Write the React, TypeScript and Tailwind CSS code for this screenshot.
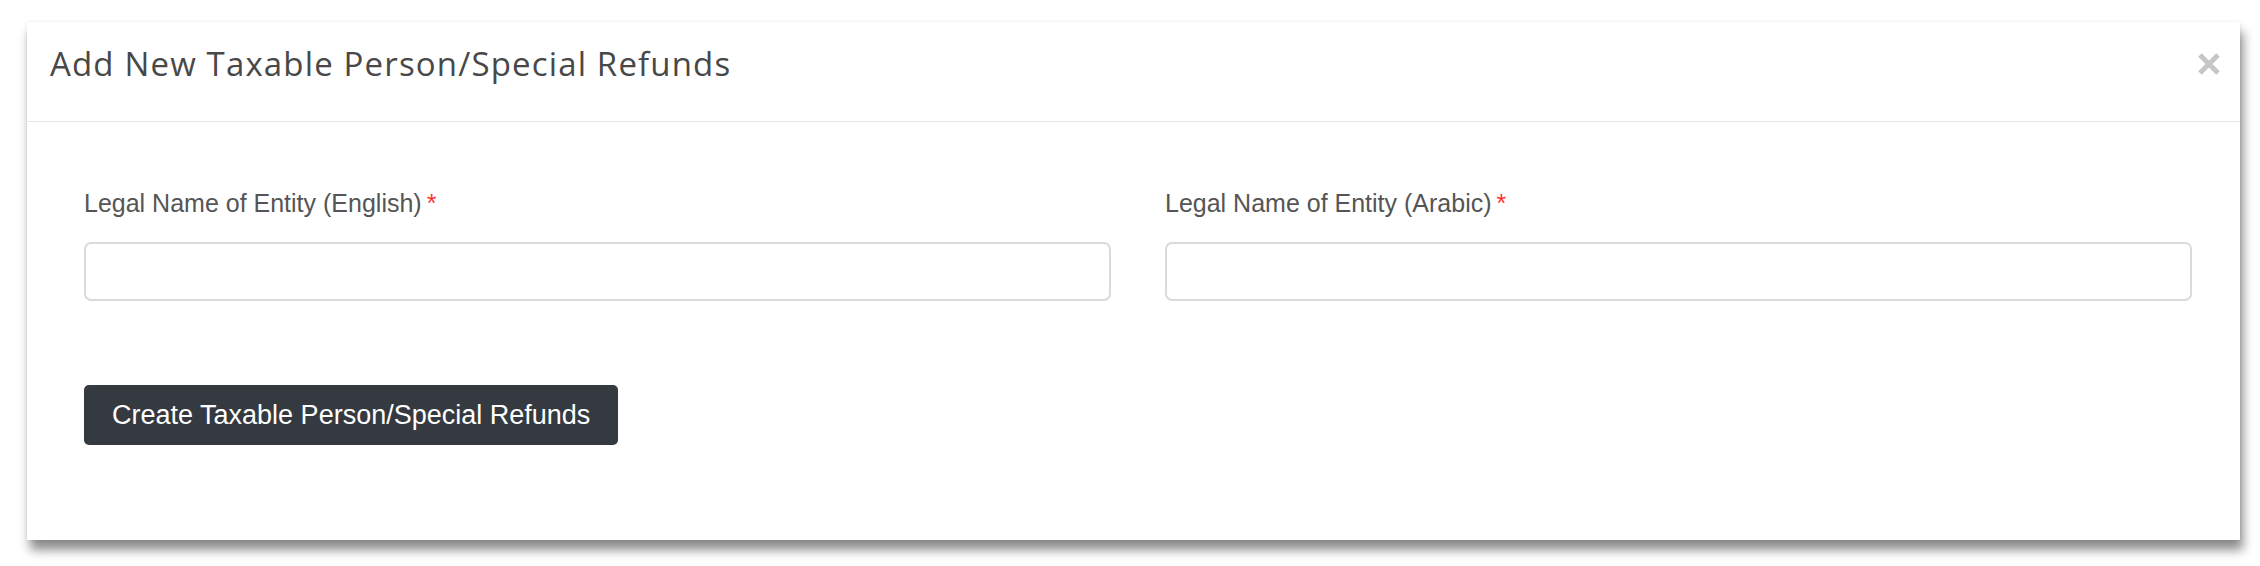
export default function App() {
  return (
    <div className="min-h-screen bg-white pt-[22px] pl-[27px]">
      <div className="w-[2213px] bg-white shadow-[3px_10px_10px_rgba(0,0,0,0.45),0_0_4px_rgba(0,0,0,0.08)]">
        {/* header */}
        <div className="flex h-[100px] items-start justify-between border-b border-[#e6e6e6] pt-[20px] pl-[23px] pr-[19px]">
          <h5 className="font-['Open_Sans',sans-serif] text-[33px] leading-[44px] font-normal tracking-[0.035em] text-[#484848]">
            Add New Taxable Person/Special Refunds
          </h5>
          <button type="button" aria-label="Close" className="flex h-[44px] w-[25px] items-center justify-center">
            <svg width="24" height="24" viewBox="0 0 24 24">
              <path d="M3 3 L21 21 M21 3 L3 21" stroke="#c6c6c6" strokeWidth="5" />
            </svg>
          </button>
        </div>

        {/* body */}
        <div className="pt-[67px] pr-[48px] pb-[95px] pl-[57px] font-['Liberation_Sans',Arial,sans-serif]">
          <div className="grid grid-cols-2 gap-[54px]">
            <F label="Legal Name of Entity (English)">
              <input className={inp} />
            </F>
            <F label="Legal Name of Entity (Arabic)">
              <input className={inp} dir="rtl" />
            </F>
          </div>

          <button
            type="button"
            className="mt-[84px] h-[60px] rounded-[5px] bg-[#343a40] px-[28px] text-[27px] text-white"
          >
            Create Taxable Person/Special Refunds
          </button>
        </div>
      </div>
    </div>
  );
}

const inp =
  "block h-[59px] w-full rounded-[7px] border-2 border-[#dadada] bg-white px-3 text-[23px] outline-none";

function F({ label, children }: { label: string; children: React.ReactNode }) {
  return (
    <div>
      <label className="mb-[25px] block text-[25px] leading-[28px] text-[#555]">
        {label}
        <span className="ml-[5px] text-[#f33]">*</span>
      </label>
      {children}
    </div>
  );
}
